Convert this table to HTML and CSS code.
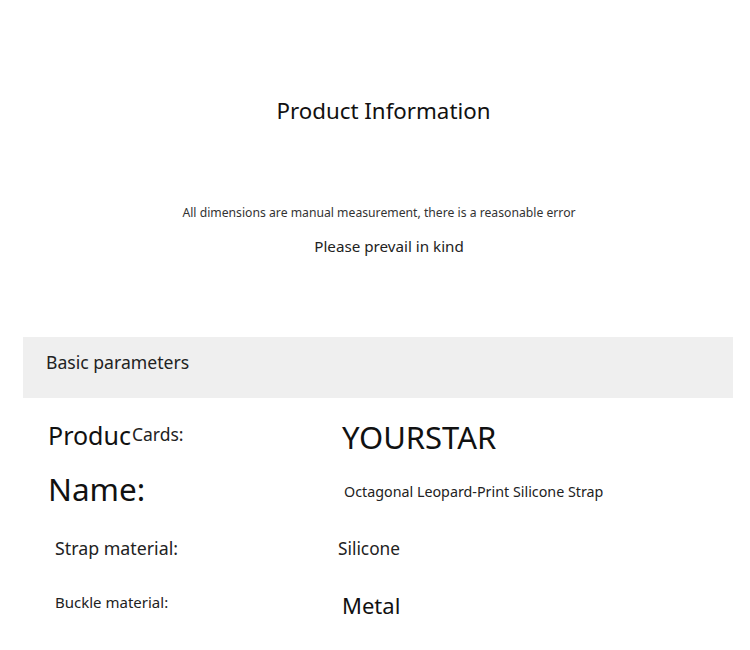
FILE: index.html
```html
<!DOCTYPE html>
<html>
<head>
<meta charset="utf-8">
<link rel="stylesheet" href="styles.css">
</head>
<body>
<div class="page">
  <header class="intro">
    <h1 class="title">Product Information</h1>
    <p class="note">All dimensions are manual measurement, there is a reasonable error</p>
    <p class="kind">Please prevail in kind</p>
  </header>
  <section class="params">
    <div class="band"><span class="band-label">Basic parameters</span></div>
    <div class="rows">
      <div class="row row-brand">
        <div class="label"><span class="produc">Produc</span><span class="cards">Cards:</span></div>
        <div class="value brand">YOURSTAR</div>
      </div>
      <div class="row row-name">
        <div class="label name">Name:</div>
        <div class="value product">Octagonal Leopard-Print Silicone Strap</div>
      </div>
      <div class="row row-strap">
        <div class="label strap">Strap material:</div>
        <div class="value silicone">Silicone</div>
      </div>
      <div class="row row-buckle">
        <div class="label buckle">Buckle material:</div>
        <div class="value metal">Metal</div>
      </div>
    </div>
  </section>
</div>
</body>
</html>
```

FILE: styles.css
```css
* { box-sizing: border-box; }
html, body { margin: 0; padding: 0; background: #ffffff; }
body {
  font-family: "Noto Sans", "Open Sans", sans-serif;
  color: #1a1a1a;
  width: 750px;
  height: 650px;
  overflow: hidden;
  line-height: 1;
}
.page { display: flex; flex-direction: column; }
.intro {
  display: flex;
  flex-direction: column;
  align-items: center;
  padding-top: 100px;
}
.title {
  margin: 0 0 0 17px;
  font-weight: 400;
  font-size: 22.3px;
  line-height: 1;
  color: #111;
}
.note {
  margin: 85px 0 0 8px;
  font-size: 12.2px;
  color: #333;
}
.kind {
  margin: 19px 0 0 28px;
  font-size: 15.2px;
  color: #222;
}
.params { margin-top: 83px; padding: 0 17px 0 23px; }
.band {
  height: 61px;
  background: #efefef;
  padding: 17px 0 0 23px;
}
.band-label { display: block; font-size: 17.6px; color: #222; }
.rows { display: flex; flex-direction: column; padding-left: 25px; }
.row {
  display: grid;
  grid-template-columns: 294px 1fr;
  align-items: start;
  height: 55px;
}
.label { display: flex; align-items: flex-start; color: #222; }
.value { color: #1a1a1a; }
.row-brand { height: 72px; }
.produc { font-size: 25px; margin-top: 25px; color: #111; }
.cards { font-size: 17.5px; margin: 28px 0 0 1px; color: #222; }
.brand { font-size: 31px; margin-top: 24px; color: #111; }
.name { font-size: 31.5px; margin-top: 3px; color: #111; }
.product { font-size: 14.3px; margin-top: 15px; padding-left: 2px; color: #222; }
.strap { font-size: 17.8px; margin-top: 15px; padding-left: 7px; }
.silicone { font-size: 17.3px; margin: 15px 0 0 -4px; color: #222; }
.buckle { font-size: 15px; margin-top: 15px; padding-left: 7px; }
.metal { font-size: 22px; margin-top: 14px; color: #111; }
```
